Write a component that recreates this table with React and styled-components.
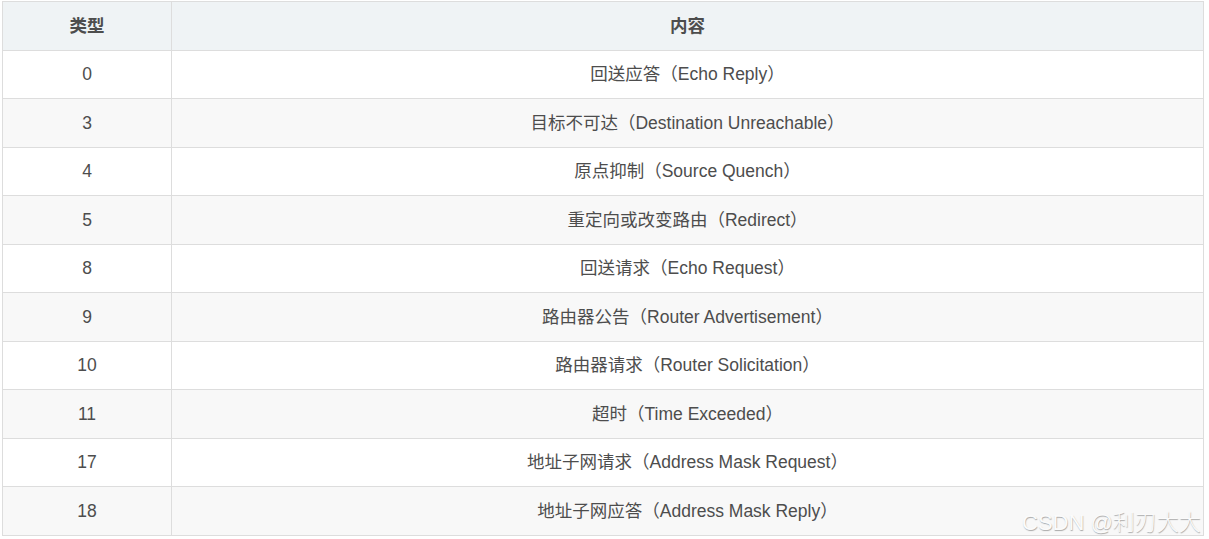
import React from "react";
import styled, { createGlobalStyle } from "styled-components";

const Global = createGlobalStyle`
  html, body { margin: 0; padding: 0; background: #fff; overflow: hidden; }
  body { font-family: "Liberation Sans", "Noto Sans CJK SC", sans-serif; }
`;

const Page = styled.div`
  position: relative;
  width: 1209px;
  height: 539px;
  padding: 1px 0 0 2px;
  box-sizing: border-box;
  overflow: hidden;
`;

const Table = styled.table`
  width: 1202px;
  border-collapse: collapse;
  table-layout: fixed;
  font-size: 17.5px;
  line-height: 24px;
  color: #4d4d4d;
`;

const Th = styled.th`
  height: 47.5px;
  background: #eff3f5;
  border: 1px solid #dddddd;
  font-weight: bold;
  text-align: center;
  padding: 0;
  color: #4d4d4d;
  width: ${(p) => p.$w || "auto"};
`;

const Row = styled.tr`
  background: ${(p) => (p.$odd ? "#f8f8f8" : "#ffffff")};
`;

const Td = styled.td`
  height: 47.5px;
  border: 1px solid #dddddd;
  text-align: center;
  padding: 0;
`;

const Watermark = styled.div`
  position: absolute;
  left: 1022px;
  top: 504px;
  font-size: 22px;
  font-weight: 300;
  white-space: nowrap;
  color: #fbfbfb;
  text-shadow: 0.5px 0.5px 1px #a8a8a8;
  font-family: "Liberation Sans", "Noto Sans CJK SC", sans-serif;
`;

const rows = [
  ["0", "回送应答（Echo Reply）"],
  ["3", "目标不可达（Destination Unreachable）"],
  ["4", "原点抑制（Source Quench）"],
  ["5", "重定向或改变路由（Redirect）"],
  ["8", "回送请求（Echo Request）"],
  ["9", "路由器公告（Router Advertisement）"],
  ["10", "路由器请求（Router Solicitation）"],
  ["11", "超时（Time Exceeded）"],
  ["17", "地址子网请求（Address Mask Request）"],
  ["18", "地址子网应答（Address Mask Reply）"],
];

export default function App() {
  return (
    <Page>
      <Global />
      <Table>
        <thead>
          <tr>
            <Th $w="168px">类型</Th>
            <Th>内容</Th>
          </tr>
        </thead>
        <tbody>
          {rows.map(([t, c], i) => (
            <Row key={t} $odd={i % 2 === 1}>
              <Td>{t}</Td>
              <Td>{c}</Td>
            </Row>
          ))}
        </tbody>
      </Table>
      <Watermark>CSDN @利刃大大</Watermark>
    </Page>
  );
}
